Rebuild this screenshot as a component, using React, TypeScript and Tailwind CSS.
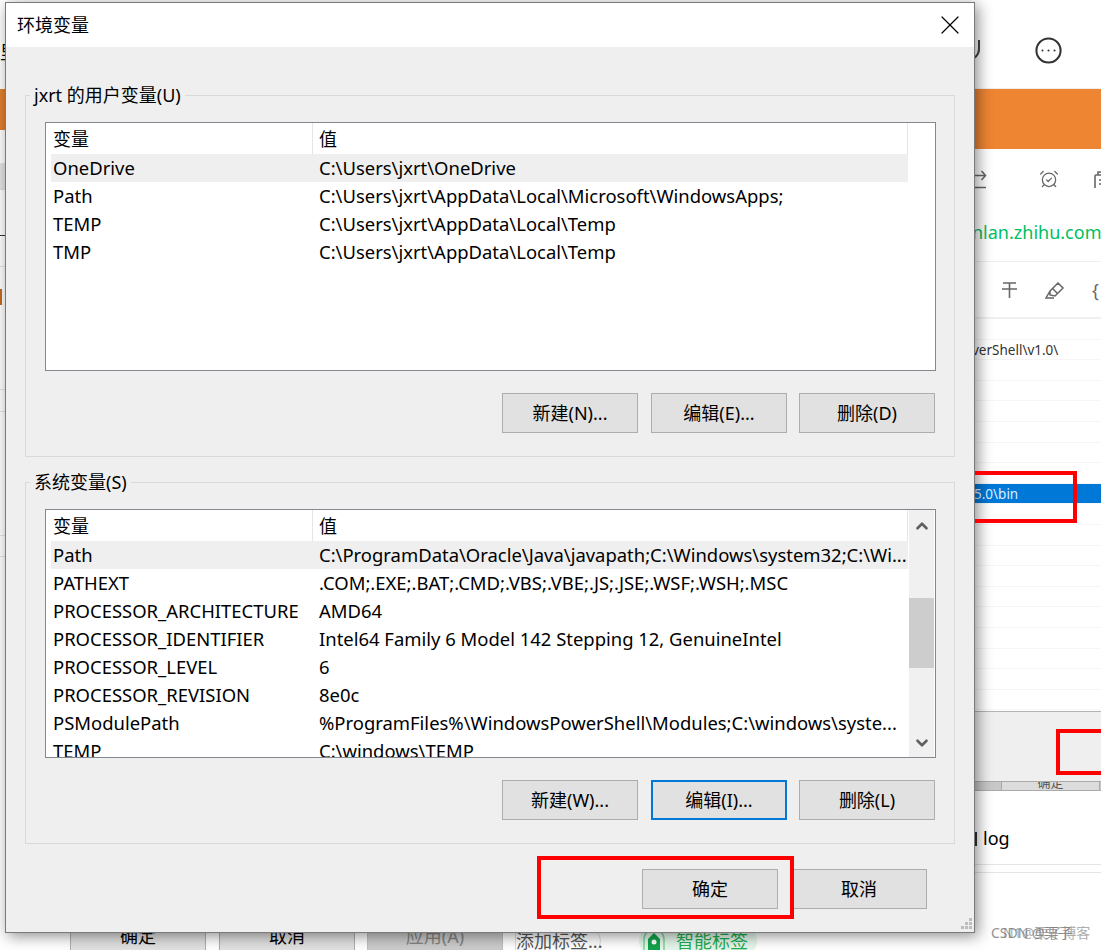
import { AlarmClockCheck, ChevronDown, ChevronUp, CircleEllipsis, X } from "lucide-react";

const userVars = [
  ["OneDrive", "C:\\Users\\jxrt\\OneDrive"],
  ["Path", "C:\\Users\\jxrt\\AppData\\Local\\Microsoft\\WindowsApps;"],
  ["TEMP", "C:\\Users\\jxrt\\AppData\\Local\\Temp"],
  ["TMP", "C:\\Users\\jxrt\\AppData\\Local\\Temp"],
];

const sysVars = [
  ["Path", "C:\\ProgramData\\Oracle\\Java\\javapath;C:\\Windows\\system32;C:\\Wi..."],
  ["PATHEXT", ".COM;.EXE;.BAT;.CMD;.VBS;.VBE;.JS;.JSE;.WSF;.WSH;.MSC"],
  ["PROCESSOR_ARCHITECTURE", "AMD64"],
  ["PROCESSOR_IDENTIFIER", "Intel64 Family 6 Model 142 Stepping 12, GenuineIntel"],
  ["PROCESSOR_LEVEL", "6"],
  ["PROCESSOR_REVISION", "8e0c"],
  ["PSModulePath", "%ProgramFiles%\\WindowsPowerShell\\Modules;C:\\windows\\syste..."],
  ["TEMP", "C:\\windows\\TEMP"],
];

const Btn = ({ label, focus, className }: { label: string; focus?: boolean; className?: string }) => (
  <div
    className={`flex h-10 w-[136px] items-center justify-center bg-[#e1e1e1] text-black ${
      focus ? "border-2 border-[#0078d7]" : "border border-[#adadad]"
    } ${className ?? ""}`}
  >
    {label}
  </div>
);

const Rows = ({ rows }: { rows: string[][] }) => (
  <div className="ml-[5px] w-[857px] text-[18.45px]">
    {rows.map((r, i) => (
      <div key={r[0]} className={`flex h-7 items-center whitespace-nowrap pl-[2px] ${i === 0 ? "bg-[#efefef]" : ""}`}>
        <div className="w-[266px] shrink-0">{r[0]}</div>
        <div>{r[1]}</div>
      </div>
    ))}
  </div>
);

const Header = () => (
  <div className="flex h-[31px] w-[862px] items-center">
    <div className="flex h-full w-[267px] items-center border-r border-[#e5e5e5] pl-[7px]">变量</div>
    <div className="flex h-full flex-1 items-center border-r border-[#e5e5e5] pl-[6px]">值</div>
  </div>
);

const Group = ({ title, children, className }: { title: string; children: React.ReactNode; className?: string }) => (
  <div className={`relative w-[930px] border border-[#d9d9d9] pl-[19px] pt-[26px] ${className ?? ""}`}>
    <div className="absolute left-[4px] top-[-13px] bg-[#efefef] px-1 leading-6">{title}</div>
    {children}
  </div>
);

const RightBackdrop = () => (
  <div className="absolute left-[975px] top-0 flex h-[950px] w-[126px] flex-col overflow-hidden bg-white text-black">
    <div className="relative h-[89px] shrink-0 border-b border-[#eeeeee]">
      <svg className="absolute left-0 top-[38px]" width="6" height="22" viewBox="0 0 6 22" fill="none" stroke="#444" strokeWidth="2">
        <path d="M4 2v9c0 4-2 7-5 9" />
      </svg>
      <CircleEllipsis className="absolute left-[59px] top-[36px] text-[#333]" size={29} strokeWidth={1.7} />
    </div>
    <div className="h-[60px] shrink-0 bg-[#ee8533]" />
    <div className="relative h-[113px] shrink-0 border-b border-[#eeeeee]">
      <svg className="absolute left-0 top-[21px]" width="12" height="20" viewBox="0 0 12 20" fill="none" stroke="#666" strokeWidth="1.6">
        <path d="M0 5.500h10M6.500 1l4 4.500-4 4.500M0 17.500h11" />
      </svg>
      <AlarmClockCheck className="absolute left-[64px] top-[20px] text-[#666]" size={20} strokeWidth={1.5} />
      <svg className="absolute left-[119px] top-[22px]" width="10" height="18" viewBox="0 0 10 18" fill="none" stroke="#666" strokeWidth="1.6">
        <path d="M1 17V5q0-1 1-1h8M4 4V1h6M5 9h5M5 13h5" />
      </svg>
      <div className="absolute left-[-3px] top-[69px] whitespace-nowrap text-[#00bf5f]">nlan.zhihu.com</div>
    </div>
    <div className="relative h-[57px] shrink-0 border-b-2 border-[#f0f0f0]">
      <svg className="absolute left-[27px] top-[20px]" width="15" height="16" viewBox="0 0 15 16" fill="none" stroke="#666" strokeWidth="1.6">
        <path d="M1 1h13M0 7h15M7.500 1v15" />
      </svg>
      <svg className="absolute left-[70px] top-[20px]" width="20" height="17" viewBox="0 0 20 17" fill="none" stroke="#666" strokeWidth="1.5">
        <path d="M5 9l8-8 5 5-8 8-5-1zM5 9l-4 7h8M8 7l4 4" />
      </svg>
      <div className="absolute left-[117px] top-[14px] text-[#666]">{"{"}</div>
    </div>
    <div className="flex h-[392px] shrink-0 flex-col text-[13.5px] text-[#333]">
      {Array.from({ length: 19 }).map((_, i) => (
        <div
          key={i}
          className={`flex h-[20.6px] shrink-0 items-center whitespace-nowrap border-b border-[#f6f6f6] ${
            i === 8 ? "bg-[#0078d7] text-[#dfefff]" : ""
          }`}
        >
          {i === 1 && <span className="-ml-[3px] mt-[2px]">verShell\v1.0\</span>}
          {i === 8 && <span className="-ml-[1px]">5.0\bin</span>}
        </div>
      ))}
    </div>
    <div className="h-[70px] shrink-0 border-t border-[#b4b4b4] bg-[#efefef]" />
    <div className="flex h-[10px] shrink-0 overflow-hidden border-y border-[#aaa] bg-[#c8c8c8] pl-[26px]">
      <div className="h-full w-[99px] border-x border-[#aaa] bg-[#dcdcdc] text-center text-[13px] leading-[0px] text-[#555]">确定</div>
    </div>
    <div className="flex h-[74px] shrink-0 items-center whitespace-nowrap border-b border-[#e5e5e5] pt-[20px] text-[18px]">
      <div className="mt-[2px] h-[14px] w-[2px] shrink-0 bg-[#333]" />
      <span className="ml-[6px]">log</span>
    </div>
    <div className="h-2 shrink-0 border-b border-[#e5e5e5]" />
  </div>
);

const LeftBackdrop = () => (
  <div className="absolute left-0 top-0 flex h-[950px] w-[6px] flex-col overflow-hidden bg-white">
    <div className="h-[89px] shrink-0 pt-[38px] text-black">里</div>
    <div className="h-[41px] shrink-0 bg-[#e07f2f]" />
    <div className="h-[33px] shrink-0" />
    <div className="h-[27px] shrink-0 border-b border-[#ddd] bg-[#e4e4e4]" />
    <div className="h-[46px] shrink-0 border-b border-[#333]" />
    <div className="h-[31px] shrink-0 border-b border-[#e5e5e5]" />
    <div className="mt-[22px] h-[16px] w-[2px] shrink-0 bg-[#c56a20]" />
    <div className="h-[85px] shrink-0 border-b border-[#e5e5e5]" />
    <div className="h-[22px] shrink-0 border-b border-[#e5e5e5]" />
    <div className="h-[124px] shrink-0 border-b border-[#e5e5e5] pt-[70px]" />
    <div className="h-[21px] shrink-0 border-b border-[#e5e5e5]" />
  </div>
);

const BottomBackdrop = () => (
  <div className="absolute left-0 top-[916px] flex h-[40px] w-[1000px] items-center pl-[70px] text-black">
    <div className="flex h-10 w-[136px] items-center justify-center border border-[#adadad] bg-[#e1e1e1]">确定</div>
    <div className="ml-[13px] flex h-10 w-[136px] items-center justify-center border border-[#adadad] bg-[#e1e1e1]">取消</div>
    <div className="ml-[12px] flex h-10 w-[136px] items-center justify-center border border-[#bfbfbf] bg-[#cccccc] text-[#838383]">应用(A)</div>
    <div className="ml-[12px] mt-[10px] flex h-[28px] w-[86px] items-center whitespace-nowrap rounded-r-full border border-[#ddd] text-[#555]">添加标签...</div>
    <div className="ml-[38px] mt-[10px] flex h-[28px] w-[118px] items-center rounded-full bg-[#e5f6ea] pl-[3px] text-[#1fae4f]">
      <svg width="24" height="28" viewBox="0 0 24 28" className="mr-[10px] shrink-0">
        <path d="M12 2a10 10 0 0 1 10 10v16H2V12A10 10 0 0 1 12 2z" fill="none" stroke="#7fd39b" strokeWidth="1.5" />
        <path d="M12 6l6 6v13H6V12z" fill="#12a44a" />
        <circle cx="12" cy="15" r="2.500" fill="#fff" />
      </svg>
      智能标签
    </div>
  </div>
);

export default function App() {
  return (
    <div
      className="relative h-[950px] w-[1101px] overflow-hidden bg-white text-[18px] leading-7 text-black"
      style={{ fontFamily: '"Noto Sans", "Noto Sans CJK SC", sans-serif' }}
    >
      <LeftBackdrop />
      <RightBackdrop />
      <BottomBackdrop />

      {/* the dialog */}
      <div className="absolute left-[5px] top-[2px] flex h-[931px] w-[970px] flex-col border border-[#7a7a7a] bg-[#efefef] shadow-[3px_3px_14px_rgba(0,0,0,0.45)]">
        <div className="flex h-11 shrink-0 items-center justify-between bg-white pl-[11px] pr-[8px]">
          <span>环境变量</span>
          <X size={32} strokeWidth={0.9} className="text-black" />
        </div>

        <div className="flex flex-col pl-[19px] pt-[48px]">
          <Group title="jxrt 的用户变量(U)" className="h-[362px]">
            <div className="h-[249px] w-[891px] border border-[#828790] bg-white">
              <Header />
              <Rows rows={userVars} />
            </div>
            <div className="mt-[22px] flex w-[890px] justify-end">
              <Btn label="新建(N)..." className="mr-[13px]" />
              <Btn label="编辑(E)..." className="mr-3" />
              <Btn label="删除(D)" />
            </div>
          </Group>

          <Group title="系统变量(S)" className="mt-[25px] h-[362px]">
            <div className="flex h-[249px] w-[891px] overflow-hidden border border-[#828790] bg-white">
              <div className="w-[862px] shrink-0 overflow-hidden">
                <Header />
                <Rows rows={sysVars} />
              </div>
              <div className="ml-px flex w-[25px] flex-col items-center bg-[#f0f0f0]">
                <ChevronUp size={18} strokeWidth={3.5} className="mt-[7px] text-[#606060]" />
                <div className="mt-[63px] h-[70px] w-full bg-[#cdcdcd]" />
                <ChevronDown size={18} strokeWidth={3.5} className="mt-[66px] text-[#606060]" />
              </div>
            </div>
            <div className="mt-[22px] flex w-[890px] justify-end">
              <Btn label="新建(W)..." className="mr-[13px]" />
              <Btn label="编辑(I)..." focus className="mr-3" />
              <Btn label="删除(L)" />
            </div>
          </Group>
        </div>

        <div className="mt-[25px] flex justify-end pr-[47px]">
          <Btn label="确定" className="mr-[13px]" />
          <Btn label="取消" />
        </div>

        <svg className="absolute bottom-[2px] right-[2px]" width="12" height="12" viewBox="0 0 12 12" fill="#bdbdbd">
          <path d="M9 0h3v3H9zM5 4h3v3H5zM9 4h3v3H9zM1 8h3v3H1zM5 8h3v3H5zM9 8h3v3H9z" />
        </svg>
      </div>

      {/* red annotation boxes */}
      <div className="absolute left-[537px] top-[856px] h-[63px] w-[257px] border-[4px] border-[#ff0000]" />
      <div className="absolute left-[975px] top-[471px] h-[52px] w-[102px] border-y-[4px] border-r-[4px] border-[#ff0000]" />
      <div className="absolute left-[1056px] top-[729px] h-[46px] w-[60px] border-[4px] border-[#ff0000]" />

      {/* watermark */}
      <div className="absolute left-[991px] top-[919px] whitespace-nowrap text-[14px] text-[#777] opacity-80">CSDN @栗子</div>
      <div className="absolute left-[1003px] top-[919px] whitespace-nowrap text-[14px] text-[#777] opacity-60">N1@栗子博客</div>
    </div>
  );
}
